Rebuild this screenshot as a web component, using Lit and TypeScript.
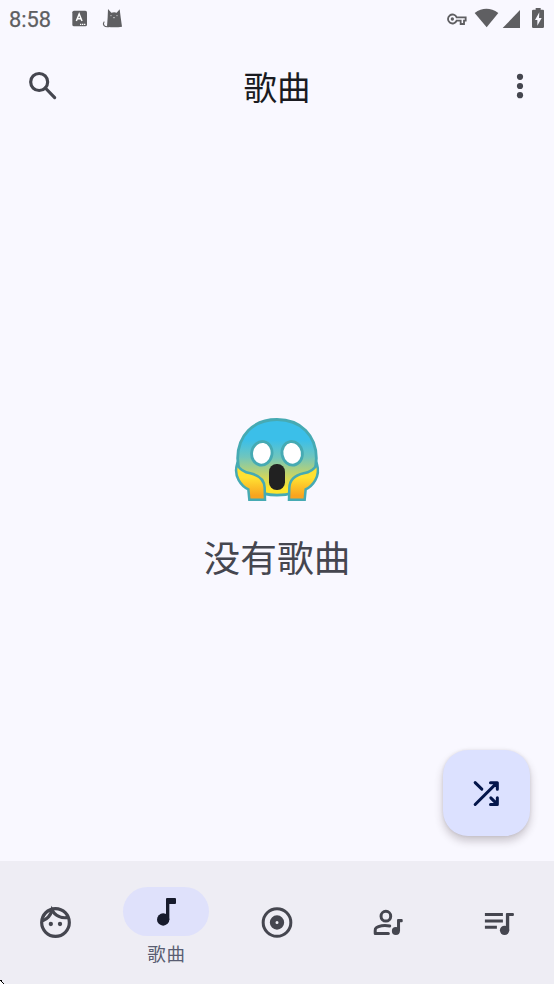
import { LitElement, html, svg, css } from "lit";
import { customElement } from "lit/decorators.js";

const navItems = [
  {
    id: "artists",
    box: "111 132 111 111",
    art: svg`<g fill="none" stroke="currentColor" stroke-width="9.500">
      <circle cx="166.500" cy="187.500" r="41.500"/>
      <path d="M128 182C142 177 152 165 156 150C165 167 184 176 206 172"/></g>
      <path d="M129 176C133 165 141 156 151 152" fill="none" stroke="currentColor" stroke-width="4"/>
      <circle cx="152.500" cy="192" r="6.500" fill="currentColor"/><circle cx="180" cy="192" r="6.500" fill="currentColor"/>`,
  },
  {
    id: "songs",
    label: "歌曲",
    box: "114 54 111 111",
    art: svg`<circle cx="159.500" cy="133.500" r="18.500" fill="currentColor"/>
      <path fill="currentColor" d="M168 72q0-3 3-3h24q3 0 3 3v12q0 3-3 3h-17v47h-10z"/>`,
  },
  {
    id: "albums",
    box: "54 42 111 111",
    art: svg`<circle cx="111" cy="97.500" r="41.500" fill="none" stroke="currentColor" stroke-width="9"/>
      <circle cx="111" cy="97.500" r="13" fill="none" stroke="currentColor" stroke-width="17"/>`,
  },
  {
    id: "album-artists",
    box: "387.9 42 111 111",
    art: svg`<g fill="none" stroke="currentColor" stroke-width="9" stroke-linejoin="round" stroke-linecap="round">
      <circle cx="438.500" cy="78.500" r="14.500"/>
      <path d="M450 108C433 104 416 108 410 113Q406 116 406.500 122V130.500H446"/></g>
      <circle cx="468.500" cy="123" r="12" fill="currentColor"/>
      <path fill="currentColor" d="M472 90q0-3 3-3h11q3 0 3 3v4q0 3-3 3h-5v27h-9z"/>`,
  },
  {
    id: "playlists",
    box: "60.3 42 111 111",
    art: svg`<path fill="none" stroke="currentColor" stroke-width="9" d="M75 73.500H129M75 93H129M75 112H111"/>
      <circle cx="134" cy="121" r="14" fill="currentColor"/>
      <path fill="currentColor" d="M138 72q0-3 3-3h18q3 0 3 3v3q0 3-3 3h-11v43h-10z"/>`,
  },
];

@customElement("app-root")
export class AppRoot extends LitElement {
  static styles = css`
    :host {
      display: flex;
      flex-direction: column;
      position: relative;
      box-sizing: border-box;
      width: 100%;
      height: 984px;
      overflow: hidden;
      background: #f9f8ff;
      color: #45464f;
      font-family: Roboto, "Noto Sans CJK SC", sans-serif;
    }
    svg { display: block; flex: none; }
    .status {
      display: flex;
      justify-content: space-between;
      height: 40px;
      color: #5f5f62;
    }
    .left { display: flex; }
    .time {
      width: 60px;
      box-sizing: border-box;
      padding-left: 9px;
      font-size: 21.800px;
      font-weight: 400;
      line-height: 39px;
      -webkit-text-stroke: 0.250px currentColor;
    }
    .bar {
      display: grid;
      grid-template-columns: 85px 1fr 85px;
      align-items: center;
      height: 92px;
    }
    .bar svg:last-child { justify-self: end; }
    .title {
      margin: 0;
      padding-top: 5px;
      text-align: center;
      font-size: 33.500px;
      font-weight: 400;
      line-height: 50px;
      color: #1a1b21;
    }
    .content {
      flex: 1;
      display: flex;
      flex-direction: column;
      align-items: center;
      padding-top: 273px;
    }
    .empty {
      margin: 18px 0 0;
      font-size: 36.700px;
      line-height: 54px;
    }
    .fab {
      display: grid;
      place-items: center;
      align-self: flex-end;
      margin: auto 24.500px 25px 0;
      width: 86.500px;
      height: 86px;
      padding: 0;
      border: 0;
      border-radius: 25px;
      background: #dce1ff;
      color: #04164b;
      box-shadow: 0 5px 9px rgba(50, 35, 40, 0.24), 0 0 3px rgba(50, 35, 40, 0.1);
    }
    .nav {
      display: grid;
      grid-template-columns: repeat(5, 1fr);
      height: 123px;
      background: #eeedf4;
    }
    .item {
      display: flex;
      flex-direction: column;
      align-items: center;
      justify-content: center;
    }
    .item.active { justify-content: flex-start; padding-top: 26px; }
    .pill {
      display: grid;
      place-items: center;
      width: 86px;
      height: 49px;
      border-radius: 25px;
    }
    .active .pill { background: #dfe1fb; color: #171b2c; }
    .label {
      margin-top: 5px;
      font-size: 18.500px;
      line-height: 28px;
      letter-spacing: 0.8px;
      padding-left: 0.8px;
      color: #595d72;
    }
    .corner { position: absolute; left: 0; bottom: 0; }
  `;

  render() {
    return html`
      <div class="status">
        <div class="left">
          <span class="time">8:58</span>
          <svg width="80" height="40" viewBox="180 0 240 120">
            <rect x="217" y="32" width="44" height="47" rx="5" fill="currentColor"/>
            <path d="M229 63L237.500 42L246 63M232 56H243" fill="none" stroke="#fff" stroke-width="4.500"/>
            <path d="M240 73H256" stroke="#fff" stroke-width="4" stroke-dasharray="4 2"/>
            <path fill="currentColor" d="M324 27L334 38Q343 36 350 38L359 28L362 52L366 80Q344 84 321 80L323 52Z"/>
            <path d="M326 80C313 82 307 74 312 66" fill="none" stroke="currentColor" stroke-width="3.500" stroke-linecap="round"/>
            <path d="M331 47h4M349 47h4M339 52l3 2 3-2" stroke="#e8e8ec" stroke-width="2" fill="none"/>
          </svg>
        </div>
        <svg width="124" height="40" viewBox="0 0 372 120">
          <path d="M80 52H107V62H102V72H92V62H80A13.500 13.500 0 1 1 80 52Z" fill="none" stroke="currentColor" stroke-width="5.500"/>
          <circle cx="67" cy="57" r="5" fill="currentColor"/>
          <path fill="currentColor" d="M134 39Q169 14 205 39L170 82Z"/>
          <path fill="currentColor" d="M270 30V84H218Z"/>
          <path fill="currentColor" d="M310 29H317V24H332V29H339Q342 29 342 32V80Q342 84 338 84H310Q306 84 306 80V33Q306 29 310 29Z"/>
          <path fill="#f9f8ff" d="M328 37L315 60H322V77L335 54H327Z"/>
        </svg>
      </div>

      <header class="bar">
        <svg width="85" height="50" viewBox="-30 3 255 150">
          <g fill="none" stroke="#45464f" stroke-width="9.500">
            <circle cx="87.500" cy="66" r="25.500"/><path d="M106 84L134 113" stroke-linecap="round"/>
          </g>
        </svg>
        <h1 class="title">歌曲</h1>
        <svg width="64" height="50" viewBox="0 3 192 150" fill="#45464f">
          <circle cx="90" cy="50.500" r="9.300"/><circle cx="90" cy="78" r="9.300"/><circle cx="90" cy="105.500" r="9.300"/>
        </svg>
      </header>

      <main class="content">
        <svg width="104" height="110" viewBox="0 0 312 330">
          <defs>
            <linearGradient id="face" x1="0" y1="40" x2="0" y2="273" gradientUnits="userSpaceOnUse">
              <stop offset="0.280" stop-color="#3bbfe9"/><stop offset="0.500" stop-color="#70c6bd"/>
              <stop offset="0.730" stop-color="#c6d467"/><stop offset="0.900" stop-color="#fee52c"/>
            </linearGradient>
            <linearGradient id="hand" x1="0" y1="180" x2="0" y2="288" gradientUnits="userSpaceOnUse">
              <stop offset="0.350" stop-color="#ffe132"/><stop offset="0.850" stop-color="#f9a41f"/>
            </linearGradient>
          </defs>
          <path d="M156 43.500C84 43.500 38 92 38 160C38 232 86 270.500 156 270.500C226 270.500 274 232 274 160C274 92 228 43.500 156 43.500Z" fill="url(#face)" stroke="#46aab3" stroke-width="8.500"/>
          <g fill="#fff" stroke="#46aab3" stroke-width="8.500">
            <ellipse cx="110.500" cy="145" rx="30.500" ry="35.500" transform="rotate(10 110.500 145)"/>
            <ellipse cx="201.500" cy="145" rx="30.500" ry="35.500" transform="rotate(-10 201.500 145)"/>
          </g>
          <rect x="132" y="177" width="48" height="78" rx="23" fill="#212121"/>
          <g fill="url(#hand)" stroke="#46aab3" stroke-width="7.500">
            <path d="M36 178C45 194 57 202 76 205C102 211 118 226 119 248L120 284.500H73L70 253C49 243 25 214 36 178Z"/>
            <path d="M276 178C267 194 255 202 236 205C210 211 194 226 193 248L192 284.500H239L242 253C263 243 287 214 276 178Z"/>
          </g>
        </svg>
        <p class="empty">没有歌曲</p>
        <button class="fab" aria-label="随机播放">
          <svg width="37" height="37" viewBox="114.5 119.5 111 111">
            <g fill="none" stroke="currentColor" stroke-width="9" stroke-linecap="round" stroke-linejoin="round">
              <path d="M136 208L201 143M182 142.500H202.500V162M136 142.500L156 162M202.500 188V208H182M183 188L201 206"/>
            </g>
            <path fill="currentColor" d="M188 143H203V158ZM188 208H203V193Z"/>
          </svg>
        </button>
      </main>

      <nav class="nav">
        ${navItems.map(
          (item) => html`<div class="item ${item.label ? "active" : ""}" id=${item.id}>
            <div class="pill"><svg width="37" height="37" viewBox=${item.box}>${item.art}</svg></div>
            ${item.label ? html`<span class="label">${item.label}</span>` : ""}
          </div>`
        )}
      </nav>
      <svg class="corner" width="4" height="4" viewBox="0 0 4 4" shape-rendering="crispEdges">
        <path fill="#fff" d="M0 1h1v1h1v1h1v1H0z"/>
        <path fill="#000" d="M0 0h1v1H0zM1 0h1v1H1zM1 1h1v1H1zM2 2h1v1H2zM3 3h1v1H3z"/>
      </svg>
    `;
  }
}
